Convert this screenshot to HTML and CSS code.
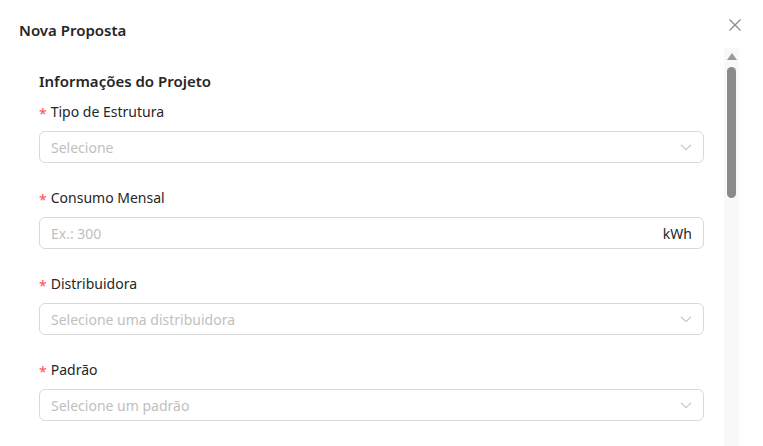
FILE: index.html
```html
<!DOCTYPE html>
<html lang="pt">
<head>
<meta charset="utf-8">
<link rel="stylesheet" href="styles.css">
</head>
<body>
<div class="modal">
  <div class="modal-header">
    <div class="modal-title">Nova Proposta</div>
    <button class="close" aria-label="Fechar">
      <svg width="14" height="14" viewBox="0 0 14 14"><path d="M1.5 1.5 L12.5 12.5 M12.5 1.5 L1.5 12.5" stroke="#8c8c8c" stroke-width="1.3" fill="none"/></svg>
    </button>
  </div>
  <div class="modal-body">
    <div class="content">
      <div class="section-title">Informações do Projeto</div>

      <div class="form-item">
        <label class="label"><span class="req">*</span>Tipo de Estrutura</label>
        <div class="input">
          <span class="placeholder">Selecione</span>
          <svg class="chev" width="12" height="12" viewBox="0 0 12 12"><path d="M1 3.8 L6 8.6 L11 3.8" stroke="#bfbfbf" stroke-width="1.1" fill="none"/></svg>
        </div>
      </div>

      <div class="form-item">
        <label class="label"><span class="req">*</span>Consumo Mensal</label>
        <div class="input">
          <span class="placeholder">Ex.: 300</span>
          <span class="suffix">kWh</span>
        </div>
      </div>

      <div class="form-item">
        <label class="label"><span class="req">*</span>Distribuidora</label>
        <div class="input">
          <span class="placeholder">Selecione uma distribuidora</span>
          <svg class="chev" width="12" height="12" viewBox="0 0 12 12"><path d="M1 3.8 L6 8.6 L11 3.8" stroke="#bfbfbf" stroke-width="1.1" fill="none"/></svg>
        </div>
      </div>

      <div class="form-item">
        <label class="label"><span class="req">*</span>Padrão</label>
        <div class="input">
          <span class="placeholder">Selecione um padrão</span>
          <svg class="chev" width="12" height="12" viewBox="0 0 12 12"><path d="M1 3.8 L6 8.6 L11 3.8" stroke="#bfbfbf" stroke-width="1.1" fill="none"/></svg>
        </div>
      </div>
    </div>
    <div class="scrollbar">
      <div class="arrow"></div>
      <div class="thumb"></div>
    </div>
  </div>
</div>
</body>
</html>
```

FILE: styles.css
```css
* { box-sizing: border-box; }
html, body {
  margin: 0;
  padding: 0;
  background: #ffffff;
  height: 446px;
  overflow: hidden;
}
body {
  font-family: "Segoe UI", "Noto Sans", "Open Sans", sans-serif;
  color: rgba(0, 0, 0, 0.88);
  font-size: 14px;
}
.modal {
  width: 763px;
  height: 446px;
  display: flex;
  flex-direction: column;
}
.modal-header {
  height: 48px;
  flex: none;
  display: flex;
  align-items: flex-start;
  justify-content: space-between;
  padding: 19px 21px 0 19px;
}
.modal-title {
  font-size: 15px;
  font-weight: 600;
  line-height: 22px;
  color: #262626;
}
.close {
  border: 0;
  background: transparent;
  padding: 0;
  width: 14px;
  height: 14px;
  margin-top: -1px;
  display: flex;
  cursor: pointer;
}
.modal-body {
  flex: 1;
  display: flex;
  padding-left: 19px;
  padding-right: 24px;
  min-height: 0;
}
.content {
  flex: 1;
  padding: 21px 20px 0 20px;
  overflow: hidden;
}
.section-title {
  font-size: 15px;
  font-weight: 600;
  line-height: 24px;
  color: #262626;
  margin-bottom: 8px;
}
.form-item {
  margin-bottom: 24px;
}
.label {
  display: flex;
  align-items: flex-start;
  line-height: 22px;
  height: 22px;
  margin-bottom: 8px;
  font-size: 14px;
  color: #262626;
}
.req {
  color: #ff4d4f;
  font-size: 14px;
  margin-right: 4px;
  line-height: 14px;
  margin-top: 6px;
}
.input {
  height: 32px;
  border: 1px solid #d9d9d9;
  border-radius: 6px;
  display: flex;
  align-items: center;
  padding: 0 11px;
}
.placeholder {
  flex: 1;
  color: #bfbfbf;
  font-size: 14px;
}
.suffix {
  color: #1f1f1f;
  font-size: 14px;
}
.chev {
  flex: none;
}
.scrollbar {
  width: 15px;
  flex: none;
  background: #f8f8f8;
  display: flex;
  flex-direction: column;
  align-items: center;
}
.arrow {
  margin-top: 5px;
  width: 0;
  height: 0;
  border-left: 5px solid transparent;
  border-right: 5px solid transparent;
  border-bottom: 7px solid #9a9a9a;
}
.thumb {
  margin-top: 7px;
  width: 9px;
  height: 131px;
  border-radius: 4.5px;
  background: #8b8b8b;
}
```
